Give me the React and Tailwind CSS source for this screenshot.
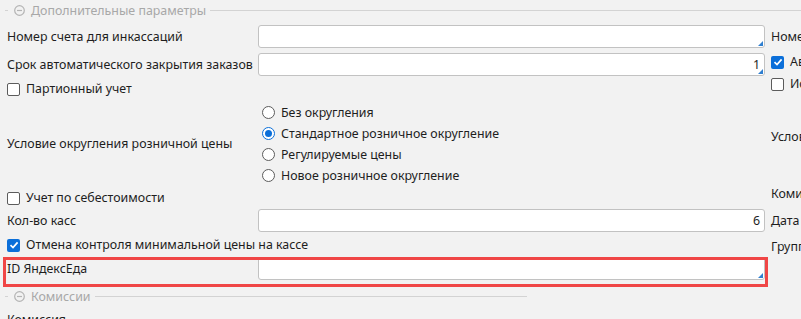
import React from "react";

const FONT = { fontFamily: '"Noto Sans", "Open Sans", sans-serif' };

function CircleMinus() {
  return (
    <svg width="11" height="11" viewBox="0 0 11 11" className="shrink-0">
      <circle cx="5.5" cy="5.5" r="4.8" fill="none" stroke="#b4b4b4" strokeWidth="1.2" />
      <line x1="3" y1="5.5" x2="8" y2="5.5" stroke="#b4b4b4" strokeWidth="1.2" />
    </svg>
  );
}

function GroupHeader({ title, lineClass }) {
  return (
    <div className="flex items-center h-[21px]">
      <div className="ml-[5px] w-[3px] h-px bg-[#d3d3d3]" />
      <div className="ml-[6px]">
        <CircleMinus />
      </div>
      <span className="ml-[6px] text-[12.4px] text-[#a8a8a8] leading-none whitespace-nowrap pt-[1px]">{title}</span>
      <div className={`ml-[4px] h-px bg-[#d3d3d3] ${lineClass}`} />
    </div>
  );
}

function Corner() {
  return (
    <svg width="5" height="5" viewBox="0 0 5 5" className="absolute right-[1px] bottom-[1px]">
      <polygon points="5,0 5,5 0,5" fill="#2f7fd0" />
    </svg>
  );
}

function Input({ value, corner }) {
  return (
    <div className="relative w-[507px] h-[23px] bg-white border border-[#c2c2c2] rounded-[3px] flex items-center justify-end pr-[4px] pt-[1px] text-[12.4px] text-[#1e1e1e]">
      {value}
      {corner && <Corner />}
    </div>
  );
}

function Checkbox({ checked }) {
  return checked ? (
    <div className="w-[13px] h-[13px] rounded-[2px] bg-[#0b6fd9] flex items-center justify-center shrink-0">
      <svg width="10" height="10" viewBox="0 0 10 10">
        <path d="M1.5 5.2 L4 7.6 L8.6 2.4" fill="none" stroke="white" strokeWidth="1.7" />
      </svg>
    </div>
  ) : (
    <div className="w-[13px] h-[13px] rounded-[2px] bg-white border border-[#5c5c5c] shrink-0" />
  );
}

function Radio({ checked }) {
  return checked ? (
    <div className="w-[13px] h-[13px] rounded-full border border-[#0b6fd9] bg-white flex items-center justify-center shrink-0">
      <div className="w-[7px] h-[7px] rounded-full bg-[#0b6fd9]" />
    </div>
  ) : (
    <div className="w-[13px] h-[13px] rounded-full border border-[#5c5c5c] bg-white shrink-0" />
  );
}

function LabelRow({ label, children, className = "" }) {
  return (
    <div className={`flex items-center ${className}`}>
      <div className="w-[258px] shrink-0 pl-[7px] pt-[2px] whitespace-nowrap text-[12.4px] text-[#1e1e1e]">{label}</div>
      {children}
    </div>
  );
}

function CheckRow({ checked, label, className = "" }) {
  return (
    <div className={`flex items-center pl-[7px] gap-[6px] whitespace-nowrap text-[12.4px] text-[#1e1e1e] ${className}`}>
      <Checkbox checked={checked} />
      <span>{label}</span>
    </div>
  );
}

export default function App() {
  const radios = [
    ["Без округления", false],
    ["Стандартное розничное округление", true],
    ["Регулируемые цены", false],
    ["Новое розничное округление", false],
  ];
  return (
    <div style={FONT} className="w-[801px] h-[319px] bg-[#f2f2f2] overflow-hidden">
      <GroupHeader title="Дополнительные параметры" lineClass="flex-1" />
      <div className="flex">
        <div className="w-[766px] shrink-0 flex flex-col">
          <LabelRow label="Номер счета для инкассаций" className="mt-[4px] h-[23px]">
            <Input corner />
          </LabelRow>
          <LabelRow label="Срок автоматического закрытия заказов" className="mt-[5px] h-[23px]">
            <Input value="1" corner />
          </LabelRow>
          <CheckRow label="Партионный учет" className="h-[24px] pt-[2px]" />
          <LabelRow label="Условие округления розничной цены" className="h-[86px]">
            <div className="flex flex-col pl-[4px] pt-[2px]">
              {radios.map(([t, c]) => (
                <div key={t} className="flex items-center gap-[6px] h-[21px] text-[12.4px] text-[#1e1e1e] whitespace-nowrap">
                  <Radio checked={c} />
                  <span className="pt-[1px]">{t}</span>
                </div>
              ))}
            </div>
          </LabelRow>
          <CheckRow label="Учет по себестоимости" className="h-[22px] pt-[2px]" />
          <LabelRow label="Кол-во касс" className="mt-[1px] h-[23px]">
            <Input value="6" />
          </LabelRow>
          <CheckRow checked label="Отмена контроля минимальной цены на кассе" className="h-[24px] pt-[2px]" />
          <div className="relative mt-[1px]">
            <LabelRow label="ID ЯндексЕда" className="h-[23px]">
              <Input corner />
            </LabelRow>
            <div className="absolute left-[3px] top-0 w-[765px] h-[30px] border-[3px] border-[#f04646]" />
          </div>
          <div className="mt-[6px]">
            <GroupHeader title="Комиссии" lineClass="w-[432px]" />
          </div>
          <div className="pl-[7px] text-[12.4px] text-[#1e1e1e] whitespace-nowrap leading-[20px] pt-[3px]">Комиссия</div>
        </div>
        <div className="flex-1 flex flex-col pl-[4px] text-[12.4px] text-[#1e1e1e] whitespace-nowrap overflow-hidden">
          <div className="mt-[4px] h-[23px] flex items-center pt-[2px] pl-[1px]">Номер терминала</div>
          <div className="mt-[1px] h-[24px] flex items-center gap-[6px] pl-[1px] pt-[2px]">
            <Checkbox checked />
            <span>Автоматически</span>
          </div>
          <div className="h-[21px] flex items-center gap-[6px] pl-[1px] pt-[1px]">
            <Checkbox />
            <span>Использовать</span>
          </div>
          <div className="mt-[33px] h-[20px] flex items-center pl-[1px]">Условие</div>
          <div className="mt-[37px] h-[20px] flex items-center pl-[1px]">Комиссия</div>
          <div className="mt-[6px] h-[23px] flex items-center pl-[1px]">Дата</div>
          <div className="mt-[2px] h-[24px] flex items-center pl-[1px]">Группа</div>
        </div>
      </div>
    </div>
  );
}
